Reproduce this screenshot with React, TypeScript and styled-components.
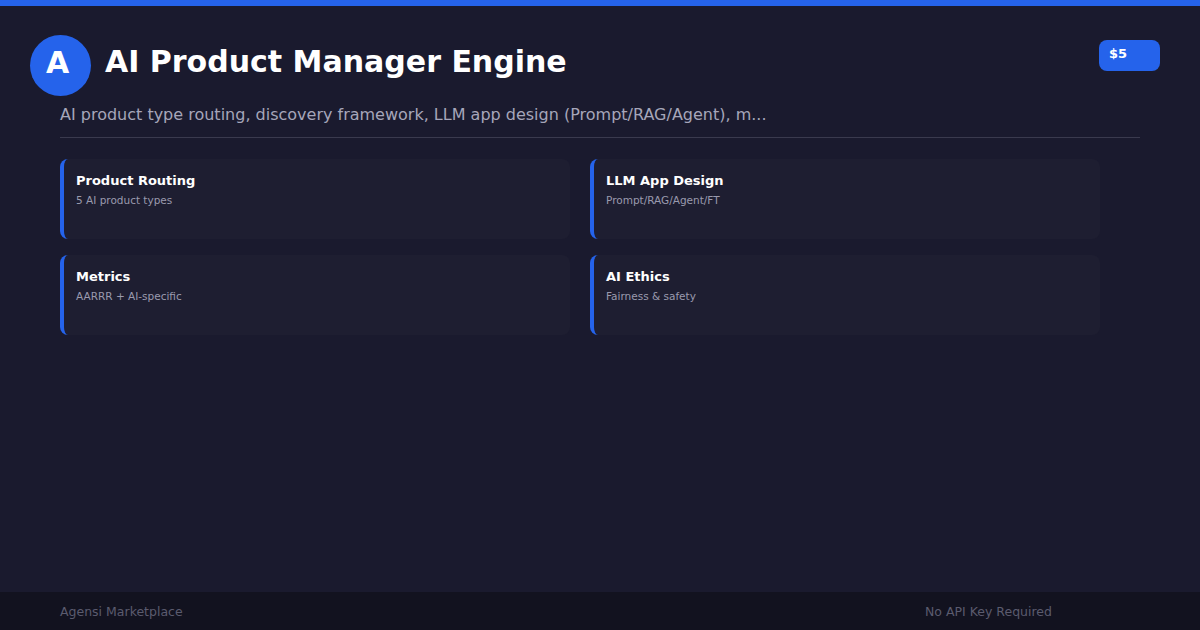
import * as React from 'react';
import styled, { createGlobalStyle } from 'styled-components';

const blue = '#2563eb';

const Global = createGlobalStyle`
  body { margin: 0; background: #1a1a2e; font-family: "DejaVu Sans", sans-serif; }
`;

const Page = styled.div`
  width: 1200px;
  height: 630px;
  display: flex;
  flex-direction: column;
  background: #1a1a2e;
  border-top: 6px solid ${blue};
  box-sizing: border-box;
`;

const Main = styled.div`
  flex: 1;
`;

const Header = styled.div`
  display: flex;
  align-items: flex-start;
  padding: 29px 40px 0 30px;
`;

const Avatar = styled.div`
  width: 61px;
  height: 61px;
  border-radius: 50%;
  background: ${blue};
  color: #fff;
  font-weight: bold;
  font-size: 30px;
  display: flex;
  align-items: center;
  justify-content: center;
  padding-right: 6px;
  padding-bottom: 6px;
  box-sizing: border-box;
`;

const Title = styled.h1`
  margin: 0 0 0 14px;
  flex: 1;
  font-size: 30px;
  line-height: 54px;
  color: #fff;
  font-weight: bold;
`;

const Price = styled.div`
  margin-top: 5px;
  width: 61px;
  height: 31px;
  box-sizing: border-box;
  padding: 6px 10px;
  border-radius: 8px;
  background: ${blue};
  color: #fff;
  font-size: 13px;
  font-weight: bold;
`;

const Body = styled.div`
  padding: 0 60px;
`;

const Subtitle = styled.p`
  margin: 9px 0 0;
  padding-bottom: 13px;
  font-size: 16px;
  color: #a6a6ba;
  border-bottom: 1px solid #3a3a4e;
`;

const Grid = styled.div`
  display: grid;
  grid-template-columns: 510px 510px;
  column-gap: 20px;
  row-gap: 16px;
  margin-top: 21px;
`;

const Card = styled.div`
  height: 80px;
  box-sizing: border-box;
  background: #1e1e31;
  border-left: 4px solid ${blue};
  border-radius: 8px;
  padding: 14px 12px;
`;

const CardTitle = styled.div`
  font-size: 13px;
  font-weight: bold;
  color: #fff;
`;

const CardText = styled.div`
  margin-top: 6px;
  font-size: 10.5px;
  color: #9a9aae;
`;

const Footer = styled.div`
  height: 38px;
  background: #12121f;
  display: flex;
  align-items: center;
  padding: 0 60px;
  font-size: 12.5px;
  color: #5b5b6e;
`;

const FooterRight = styled.span`
  margin-left: auto;
  margin-right: 88px;
`;

const cards = [
  ['Product Routing', '5 AI product types'],
  ['LLM App Design', 'Prompt/RAG/Agent/FT'],
  ['Metrics', 'AARRR + AI-specific'],
  ['AI Ethics', 'Fairness & safety'],
];

export default function App() {
  return (
    <Page>
      <Global />
      <Main>
        <Header>
          <Avatar>A</Avatar>
          <Title>AI Product Manager Engine</Title>
          <Price>$5</Price>
        </Header>
        <Body>
          <Subtitle>AI product type routing, discovery framework, LLM app design (Prompt/RAG/Agent), m...</Subtitle>
          <Grid>
            {cards.map(([t, d]) => (
              <Card key={t}>
                <CardTitle>{t}</CardTitle>
                <CardText>{d}</CardText>
              </Card>
            ))}
          </Grid>
        </Body>
      </Main>
      <Footer>
        <span>Agensi Marketplace</span>
        <FooterRight>No API Key Required</FooterRight>
      </Footer>
    </Page>
  );
}
